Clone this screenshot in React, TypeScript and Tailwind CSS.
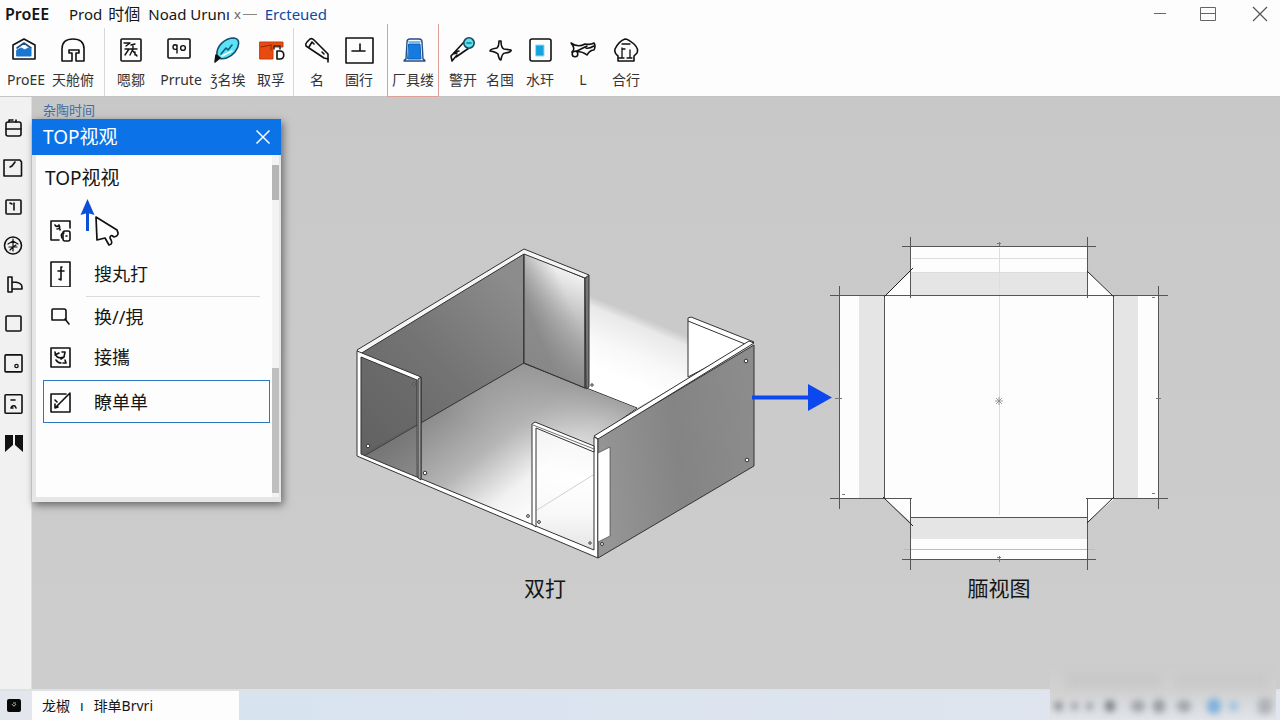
import type { ReactNode } from "react";

const ink = { fill: "none", stroke: "#111", strokeWidth: 1.6, strokeLinecap: "round", strokeLinejoin: "round" } as const;

function Icon({ w = 32, h = 28, children }: { w?: number; h?: number; children: ReactNode }) {
  return (
    <svg width={w} height={h} viewBox={`0 0 ${w} ${h}`} className="shrink-0" aria-hidden="true" {...ink}>
      {children}
    </svg>
  );
}

type Tool = { label: string; width: string; icon: ReactNode };

const fileTools: Tool[] = [
  {
    label: "ProEE",
    width: "w-11",
    icon: (
      <>
        <path d="M3 9 L14 3 L25 9 V23 H3 Z" />
        <path d="M7 12 L14 7 L21 12" stroke="#1f4e8c" />
        <path d="M7 14 L11 12 L15 14 L18 12 L21 13 V20 H7 Z" fill="#1976d2" stroke="#1976d2" strokeWidth="1" />
      </>
    ),
  },
  {
    label: "天舱俯",
    width: "w-[50px]",
    icon: <path d="M5 25 V13 C5 6 9 3 16 3 C23 3 27 6 27 13 V25 H19 V17 H22 V14 H12 V17 H15 V25 Z" />,
  },
];

const editTools: Tool[] = [
  {
    label: "嗯鄒",
    width: "w-12",
    icon: (
      <>
        <rect x="6" y="3" width="20" height="22" rx="1" />
        <path d="M9 7 H15 L11 10 M10 13 H14 L10 19 M16 9 L20 8 M15 13 H22 M18 10 V13 L15 19 M18 15 L22 20 M20 16 V19" strokeWidth="1.4" />
      </>
    ),
  },
  {
    label: "Prrute",
    width: "w-[52px]",
    icon: (
      <>
        <rect x="3" y="3" width="22" height="19" rx="1" />
        <path d="M12 9 V17 M12 11 C12 8 8 8 8 11 C8 14 12 14 12 12" strokeWidth="1.4" />
        <circle cx="18" cy="12" r="2.4" strokeWidth="1.4" />
      </>
    ),
  },
  {
    label: "ǯ名埃",
    width: "w-[42px]",
    icon: (
      <>
        <path d="M5 19 C4 10 13 2 22 2 C29 3 27 11 23 16 C18 22 11 24 7 22 Z" fill="#5be2f5" stroke="#16506e" />
        <path d="M9 18 L14 12 L16 14 L20 9" stroke="#0b5f7d" />
        <path d="M10 20 L20 15" stroke="#fff" />
        <path d="M4 19 L8 22 L3 26 Z" fill="#111" />
      </>
    ),
  },
  {
    label: "取孚",
    width: "w-11",
    icon: (
      <>
        <path d="M5 6 H28 V11 H18 V23 H5 Z" fill="#e84a10" stroke="#c43c08" strokeWidth="1" />
        <path d="M6 11 L16 9 M16 9 V14" stroke="#8e2a05" strokeWidth="1" />
        <path d="M19 13 V10 H25 V13" stroke="#333" />
        <path d="M22 15 V23 H25 C30 23 30 15 25 15 Z" fill="#fff" />
      </>
    ),
  },
];

const shapeTools: Tool[] = [
  {
    label: "名",
    width: "w-11",
    icon: (
      <>
        <path d="M5 10 Q4 8 6 6 L9 3 Q11 2 13 4 L27 18 L27 23 L23 22 Z" />
        <path d="M8 11 L11 6 L13 8 M27 23 V26 M21 16 L23 18" />
      </>
    ),
  },
  {
    label: "圄行",
    width: "w-10",
    icon: (
      <>
        <rect x="3" y="2" width="27" height="25" />
        <path d="M9 15 H22 M17 8 V15" />
      </>
    ),
  },
];

const activeTool: Tool = {
  label: "厂具缕",
  width: "w-[50px]",
  icon: (
    <>
      <path d="M9 23 L10 6 Q10 3 13 3 H22 Q25 3 25 6 L26 23 Q28 24 28 25 H7 Q7 24 9 23 Z" fill="#fff" stroke="#1f4e8c" strokeWidth="1.4" />
      <path d="M12 8 H23 L24 23 H11 Z" fill="#157be0" stroke="#0d5db0" strokeWidth="1" />
      <path d="M12 6 H23" stroke="#5ba4e6" />
    </>
  ),
};

const viewTools: Tool[] = [
  {
    label: "警开",
    width: "w-11",
    icon: (
      <>
        <path d="M5 25 L4 20 L17 6 M9 21 L22 12 M5 25 L10 19 M8 16 L12 15 M6 18 L10 17" />
        <circle cx="22" cy="7" r="5.2" fill="#5fe0ee" stroke="#17475c" />
        <path d="M20 7 H24" stroke="#0b7f95" />
      </>
    ),
  },
  {
    label: "名囤",
    width: "w-[30px]",
    icon: <path d="M17 5 Q17 12 20 13 L27 14 Q28 16 21 17 Q18 17 17 24 Q15 24 14 18 Q12 16 6 15 Q6 13 13 12 Q15 10 15 5 Z" />,
  },
  {
    label: "水玕",
    width: "w-[50px]",
    icon: (
      <>
        <rect x="6" y="3" width="21" height="22" rx="2" />
        <path d="M12 9 H20 V20 H12 Z" fill="#13a3dd" stroke="#8fdcf5" strokeWidth="1" />
      </>
    ),
  },
  {
    label: "L",
    width: "w-9",
    icon: (
      <>
        <path d="M4 7 Q11 12 18 8 Q24 9 27 7 Q29 10 27 14 Q23 14 20 19 Q14 14 5 16 Q9 13 4 7 Z" />
        <path d="M8 16 L20 10 M19 12 Q22 13 27 10" />
        <circle cx="8" cy="18" r="2.8" fill="#fff" />
      </>
    ),
  },
  {
    label: "合行",
    width: "w-[50px]",
    icon: (
      <>
        <path d="M15 3 Q18 3 24 8 Q29 13 27 17 L24 20 V25 H8 V20 Q4 17 5 13 Q9 5 15 3 Z" />
        <path d="M12 8 H20 M12 12 V22 M12 13 H15 M20 14 V22 M9 22 H14 M17 22 H22" strokeWidth="1.3" />
      </>
    ),
  },
];

function ToolButton({ label, width, icon }: Tool) {
  return (
    <button type="button" className={`${width} flex h-full shrink-0 flex-col items-center gap-1.5 pt-2`}>
      <Icon>{icon}</Icon>
      <span className="whitespace-nowrap text-[14px] leading-5 text-[#333]">{label}</span>
    </button>
  );
}

const railIcons: { name: string; icon: ReactNode }[] = [
  { name: "Layers", icon: <><rect x="3" y="4" width="15" height="14" rx="2" /><path d="M3 11 H18 M6 4 V2 H10 M13 2 V4" /></> },
  { name: "Sketch", icon: <><path d="M1 3 H17 L18.5 5 V19 H1 Z" /><path d="M7 10 L9 9 L12 5" /></> },
  { name: "Datum", icon: <><rect x="3" y="3" width="15" height="14" rx="1" /><path d="M7 6 L9 7 M11 6 V13" /></> },
  { name: "Orient", icon: <><circle cx="10" cy="9.5" r="8.5" /><path d="M5 8 L10 5 L15 8 M10 3 V15 M6 11 H14 M7 14 L10 11 L13 9" strokeWidth="1.2" /></> },
  { name: "Extrude", icon: <path d="M5 1 H9 V6 Q19 6 19 11 V13 H9 V16 H5 Z M9 6 V13" /> },
  { name: "Plane", icon: <rect x="3" y="1" width="15" height="15" rx="1" /> },
  { name: "Point", icon: <><rect x="2" y="0.9" width="17" height="17" rx="1" /><circle cx="13.5" cy="12" r="1.7" strokeWidth="1.3" /></> },
  { name: "Measure", icon: <><rect x="2" y="0.8" width="17" height="18.4" rx="1" /><path d="M8 6 L12 6 M8 14 Q9 11 12 12 L13 14 M8 14 H10" /></> },
  { name: "Bookmark", icon: <path d="M2 2 H10 L10 12 L2 19 Z M12 2 H20 V19 L12 12 Z" fill="#111" stroke="none" /> },
];

const menuRows: { label: string; row: string; icon: ReactNode }[] = [
  {
    label: "",
    row: "h-11",
    icon: (
      <>
        <path d="M11 23 H3 V4 H22 V11" />
        <path d="M7 8 Q9 11 11 8 Q13 12 9 12 M12 12 V13" />
        <rect x="15" y="14" width="7" height="10" rx="2" />
        <path d="M14 21 Q12 16 16 16 M18 19 H19" />
      </>
    ),
  },
  {
    label: "搜丸打",
    row: "h-11",
    icon: (
      <>
        <rect x="3" y="1" width="19" height="25" />
        <path d="M13 6 V19 M10 10 H16 M13 6 H14 M13 19 L11 18" />
      </>
    ),
  },
  { label: "换//挸", row: "h-10 border-t border-transparent", icon: <path d="M4 6 Q4 5 5 5 H16 Q18 5 18 7 V16 H4 Z M17 15 L21 20" /> },
  {
    label: "接攜",
    row: "h-[42px]",
    icon: (
      <>
        <rect x="3" y="4" width="19" height="19" />
        <path d="M7 8 Q8 16 16 13 M7 11 L11 9 M14 8 H17 L16 13 L13 15 M17 16 L18 19 H15 M8 16 Q10 19 13 19" />
      </>
    ),
  },
];

function BoxDrawing() {
  return (
    <svg width="418" height="330" viewBox="334 240 418 330" className="block overflow-visible" role="img" aria-label="双打" stroke="#333" strokeWidth="1" strokeLinejoin="round">
      <defs>
        <linearGradient id="leftWall" gradientUnits="userSpaceOnUse" x1="370" y1="440" x2="520" y2="290">
          <stop offset="0" stopColor="#666" />
          <stop offset="0.5" stopColor="#747474" />
          <stop offset="1" stopColor="#8c8c8c" />
        </linearGradient>
        <linearGradient id="backWall" gradientUnits="userSpaceOnUse" x1="585" y1="280" x2="545" y2="370">
          <stop offset="0" stopColor="#f0f0f0" />
          <stop offset="0.45" stopColor="#b9b9b9" />
          <stop offset="1" stopColor="#878787" />
        </linearGradient>
        <linearGradient id="backShade" gradientUnits="userSpaceOnUse" x1="524" y1="300" x2="562" y2="284">
          <stop offset="0" stopColor="#888" stopOpacity="0.9" />
          <stop offset="1" stopColor="#999" stopOpacity="0" />
        </linearGradient>
        <linearGradient id="floor" gradientUnits="userSpaceOnUse" x1="440" y1="395" x2="540" y2="520">
          <stop offset="0" stopColor="#858585" />
          <stop offset="0.45" stopColor="#b5b5b5" />
          <stop offset="0.75" stopColor="#f2f2f2" />
          <stop offset="1" stopColor="#fff" />
        </linearGradient>
        <linearGradient id="floorBack" gradientUnits="userSpaceOnUse" x1="590" y1="375" x2="540" y2="465">
          <stop offset="0" stopColor="#8c8c8c" stopOpacity="0.9" />
          <stop offset="1" stopColor="#bbb" stopOpacity="0" />
        </linearGradient>
        <linearGradient id="glow" gradientUnits="userSpaceOnUse" x1="640" y1="316" x2="615" y2="376">
          <stop offset="0" stopColor="#e4e4e4" stopOpacity="0" />
          <stop offset="0.15" stopColor="#e9e9e9" />
          <stop offset="0.6" stopColor="#f8f8f8" />
          <stop offset="1" stopColor="#fff" />
        </linearGradient>
        <linearGradient id="side" gradientUnits="userSpaceOnUse" x1="598" y1="440" x2="754" y2="420">
          <stop offset="0" stopColor="#959595" />
          <stop offset="0.5" stopColor="#848484" />
          <stop offset="1" stopColor="#8c8c8c" />
        </linearGradient>
        <linearGradient id="window" gradientUnits="userSpaceOnUse" x1="560" y1="480" x2="560" y2="550">
          <stop offset="0" stopColor="#fff" />
          <stop offset="0.5" stopColor="#f6f6f6" />
          <stop offset="1" stopColor="#dedede" />
        </linearGradient>
      </defs>

      <path d="M589 295 L690 337 V378 L637 408 L587 389 Z" fill="url(#glow)" stroke="none" />
      <path d="M359 455 L523 363 L637 408 L598 436 V552 Z" fill="url(#floor)" />
      <path d="M523 364 L636 408 L598 436 V480 L440 430 L420 422 Z" fill="url(#floorBack)" stroke="none" />
      <path d="M358 353 L524 253 V363 L364 456 L358 455 Z" fill="url(#leftWall)" />
      <path d="M524 253 L585 278 V388 L524 363 Z" fill="url(#backWall)" />
      <path d="M524 253 L585 278 V388 L524 363 Z" fill="url(#backShade)" />
      <path d="M585 278 L589 275 V387 L586 389 Z" fill="#777" />
      <path d="M357 350 L524 249 L589 275 L585 278 L524 254 L360 354 Z" fill="#f5f5f5" />

      <path d="M688 377 V318 L691 317 L754 342 L749 345 Z" fill="#fff" />
      <path d="M688 321 L745 344" fill="none" />
      <path d="M360 355 L416 379 V425 L364 454 H360 Z" fill="#555" fillOpacity="0.15" stroke="none" />
      <path d="M362 454 L416 424 V477 Z" fill="#555" fillOpacity="0.35" stroke="none" />
      <path d="M535 427 L594 451 V550 L535 527 Z" fill="url(#window)" fillOpacity="0.8" stroke="none" />
      <path d="M537 510 L593 475" stroke="#d0d0d0" />

      <path d="M357 456 V351 L421 377 V478 L417 477 V380 L361 357 V454 L594 550 V437 L598 439 V558 Z" fill="#fff" />
      <path d="M418 379 L421 377 V480 L418 478 Z" fill="#999" />
      <path d="M532 524 V424 L535 422 L594 446 V452 L536 428 V527 Z" fill="#fff" />
      <path d="M533 425 L594 449" strokeWidth="0.7" />
      <path d="M598 438 L754 345 V466 L598 558 Z" fill="url(#side)" />
      <path d="M594 436 L749 341 L754 343 L598 439 Z" fill="#fff" />
      <path d="M598 453 L610 447 V536 L598 542 Z" fill="#fff" strokeWidth="0.6" />
      <g fill="#fff" strokeWidth="1">
        <circle cx="746" cy="361" r="1.8" /><circle cx="747" cy="460" r="1.8" />
        <circle cx="368" cy="446" r="1.8" /><circle cx="425" cy="473" r="1.8" />
        <circle cx="414" cy="384" r="1.2" /><circle cx="592" cy="385" r="1.2" />
        <circle cx="528" cy="516" r="1.4" /><circle cx="539" cy="522" r="1.4" />
        <circle cx="590" cy="543" r="1.2" /><circle cx="602" cy="544" r="1.5" />
      </g>
    </svg>
  );
}

function FlatDrawing() {
  return (
    <svg width="334" height="330" viewBox="832 240 334 330" className="block overflow-visible" role="img" aria-label="腼视图" fill="none" stroke="#555" strokeWidth="1">
      <g stroke="none">
        <path d="M911 247 H1087 V271 L1114 296 H1158 V499 H1114 L1087 522 V559 H911 V522 L885 499 H840 V296 H885 L911 271 Z" fill="#fdfdfd" />
        <path d="M911 272 H1087 V296 H911 Z M911 517 H1087 V539 H911 Z M859 296 H884 V499 H859 Z M1114 296 H1138 V499 H1114 Z" fill="#e5e5e5" />
      </g>
      <path d="M911.5 258.5 H1087 M911 272.5 H1087 M999.5 248 V515" stroke="#ddd" />
      <path d="M904 549.5 H1095" stroke="#bbb" />
      <path d="M902 246.5 H1096 M910.5 237 V298 M1087.5 237 V298 M830 295.5 H1168 M839.5 286 V509 M1158.5 286 V509 M884.5 296 V499 M1113.5 296 V499 M830 498.5 H912 M1086 498.5 H1168 M910.5 498 V570 M1087.5 498 V570 M911 517.5 H1087 M902 559.5 H1096" />
      <path d="M884 297 L913 268 M1087 271 L1114 297 M883 497 L913 526 M1114 497 L1087 523" stroke="#222" />
      <path d="M995 401 H1003 M999 397 V405 M996 398 L1002 404 M1002 398 L996 404" stroke="#888" strokeWidth="0.8" />
      <path d="M997 243.5 H1001 M999.5 242 V246 M997 557.5 H1001 M999.5 556 V562 M835 398.5 H842 M1156 398.5 H1161 M842 494.5 H845 M1152 493.5 H1155 M1152 297.5 H1155" stroke="#777" />
    </svg>
  );
}

function Watermark() {
  return (
    <div className="pointer-events-none absolute bottom-0 right-1 flex h-[56px] w-[226px] flex-col justify-between overflow-hidden bg-gradient-to-b from-[#cccccc] via-[#d2d2d2] to-[#e1e4e9] px-1 pb-1.5 pt-2">
      <div className="flex h-5 gap-3 pl-3 blur-[5px]">
        <i className="h-4 w-24 bg-[#c8c8c8]" />
        <i className="h-4 w-24 bg-[#c9c9c9]" />
      </div>
      <div className="flex items-center gap-2 blur-[3px]">
        <i className="size-2.5 rounded-full bg-[#94979c]" />
        <i className="size-2 rounded-full bg-[#9da0a5]" />
        <i className="size-2 rounded-full bg-[#9da0a5]" />
        <i className="ml-1 size-3 rounded-full bg-[#7f8287]" />
        <i className="ml-2 h-3 w-4 rounded-full bg-[#a2a5aa]" />
        <i className="size-3.5 rounded-full bg-[#9a9da2]" />
        <i className="ml-1 h-3 w-4 rounded-full bg-[#a2a5aa]" />
        <i className="ml-2 size-4 rounded-full bg-[#80b1dd]" />
        <i className="size-2.5 rounded-full bg-[#9dc2e2]" />
        <i className="ml-3 size-4 rounded bg-[#b0b3b7]" />
      </div>
    </div>
  );
}

function ViewPanel() {
  return (
    <section className="absolute left-0 top-[22px] w-[249px] bg-[#fdfdfd] shadow-[2px_3px_8px_rgba(0,0,0,0.5)]">
      <header className="flex h-9 items-center justify-between bg-[#0b72e7] pl-[11px] pr-2 text-white">
        <h2 className="text-[19px] leading-6">TOP视观</h2>
        <button type="button" aria-label="Close">
          <svg width="20" height="20" viewBox="0 0 20 20" stroke="#fff" strokeWidth="1.5" aria-hidden="true">
            <path d="M3.5 3.5 L16.5 16.5 M16.5 3.5 L3.5 16.5" />
          </svg>
        </button>
      </header>
      <div className="flex border-b-[5px] border-l-4 border-r-2 border-[#e6e6e6]">
        <div className="relative min-w-0 flex-1 pb-[74px]">
          <h3 className="flex h-[53px] items-start pl-[9px] pt-[11px] text-[19px] leading-6">TOP视视</h3>
          <ul>
            {menuRows.map((r, i) => (
              <li key={i}>
                <button type="button" aria-label={r.label || "Assembly"} className={`${r.row} flex w-full items-center gap-5 pl-3 text-left text-[18px]`}>
                  <Icon w={26} h={26}>{r.icon}</Icon>
                  <span className="whitespace-nowrap leading-6">{r.label}</span>
                </button>
                {i === 1 && <hr className="-mb-px ml-[50px] mr-3 border-[#dcdcdc]" />}
              </li>
            ))}
            <li className="pl-[7px] pr-0.5 pt-0.5">
              <button type="button" className="flex h-[43px] w-full items-center gap-5 border border-[#2b78c0] pl-1 text-left text-[18px]">
                <Icon w={26} h={26}>
                  <path d="M22 5 V23 H3 V5 H18 M7 11 L9 13 M7 19 L22 4 M7 15 V19 L10 18" />
                </Icon>
                <span className="leading-6">瞭单单</span>
              </button>
            </li>
          </ul>
          <svg width="42" height="50" viewBox="0 0 42 50" className="absolute left-[44px] top-[42px]" aria-hidden="true">
            <path d="M7.5 34 V13" stroke="#0b50d8" strokeWidth="3" />
            <path d="M7.5 2 L14.5 18 L7.5 16 L0.5 18 Z" fill="#0b50d8" />
            <path d="M16 20 L37 33 Q40 39 34 40 Q30 37 30 41 Q34 47 29 48 L25 41 L17 43 Z" fill="#fff" stroke="#111" strokeWidth="1.7" strokeLinejoin="round" />
          </svg>
        </div>
        <div className="flex w-[7px] flex-col justify-between bg-[#f3f3f3] pb-1 pt-2.5">
          <div className="h-[35px] bg-[#b5b5b5]" />
          <div className="h-[125px] bg-[#bfbfbf]" />
        </div>
      </div>
    </section>
  );
}

export default function App() {
  return (
    <div className="relative flex min-h-screen flex-col overflow-hidden bg-[#cacaca] font-['Noto_Sans','Noto_Sans_CJK_SC',sans-serif] text-[#151515]">
      <header className="bg-[#fdfdfd]">
        <div className="flex h-7 items-center justify-between pl-[5px] pr-3">
          <div className="flex items-center text-[15px] leading-5">
            <h1 className="w-16 text-[16px] font-semibold">ProEE</h1>
            <nav className="flex items-center gap-1.5">
              <a href="#prod" className="whitespace-nowrap">Prod</a>
              <a href="#time" className="whitespace-nowrap text-[16px]">时個</a>
              <a href="#noad" className="ml-0.5 whitespace-nowrap">Noad Urunı</a>
            </nav>
            <span className="ml-1 flex items-center text-[13px] text-[#666]">
              x<i className="ml-0.5 h-px w-3.5 bg-[#888]" />
            </span>
            <a href="#extend" className="ml-2 text-[#0b4aa8]">Ercteued</a>
          </div>
          <div className="flex items-center">
            <button type="button" aria-label="Minimize" className="flex w-12 justify-center">
              <svg width="20" height="16" viewBox="0 0 20 16" stroke="#666" aria-hidden="true"><path d="M4 7.5 H16" /></svg>
            </button>
            <button type="button" aria-label="Restore" className="flex w-12 justify-center">
              <svg width="18" height="16" viewBox="0 0 18 16" fill="none" stroke="#666" aria-hidden="true"><path d="M1.5 1.5 H16.5 V14.5 H1.5 Z M1.5 7.5 H16.5" /></svg>
            </button>
            <button type="button" aria-label="Close window" className="flex w-9 justify-end">
              <svg width="16" height="16" viewBox="0 0 16 16" stroke="#555" strokeWidth="1.2" aria-hidden="true"><path d="M1 1 L15 15 M15 1 L1 15" /></svg>
            </button>
          </div>
        </div>
        <div className="flex h-[69px] items-start border-b border-[#c4c4c4] pl-1">
          <div className="flex h-full border-r border-[#d8d8d8] pr-1.5">
            {fileTools.map((t) => <ToolButton key={t.label} {...t} />)}
          </div>
          <div className="flex h-full border-r border-[#d8d8d8] pl-0.5">
            {editTools.map((t) => <ToolButton key={t.label} {...t} />)}
          </div>
          <div className="flex h-full pl-px pr-2">
            {shapeTools.map((t) => <ToolButton key={t.label} {...t} />)}
          </div>
          <div className="-mb-px -mt-1 flex h-[73px] border-x border-b border-[#dfa09a] pt-1">
            <ToolButton {...activeTool} />
          </div>
          <div className="flex h-full pl-0.5">
            {viewTools.map((t) => <ToolButton key={t.label} {...t} />)}
          </div>
        </div>
      </header>

      <div className="flex flex-1">
        <aside className="w-8 shrink-0 border-r border-[#dedede] bg-[#f1f1f1] pt-[21px]">
          <ul className="flex h-[335px] flex-col justify-between pl-[3px]">
            {railIcons.map((r) => (
              <li key={r.name} className="h-5">
                <button type="button" aria-label={r.name} className="block">
                  <Icon w={20} h={20}>{r.icon}</Icon>
                </button>
              </li>
            ))}
          </ul>
        </aside>
        <main className="relative min-w-0 flex-1 bg-gradient-to-b from-[#c8c8c8] to-[#cccdcc]">
          <p className="absolute left-[11px] top-[3px] text-[13px] leading-5 text-[#416b9f]">杂陶时间</p>
          <ViewPanel />
          <div className="flex items-start pl-[302px] pt-[143px]">
            <figure className="shrink-0">
              <BoxDrawing />
              <figcaption className="pl-1 pt-1.5 text-center text-[21px] leading-6">双打</figcaption>
            </figure>
            <svg width="80" height="330" viewBox="752 240 80 330" className="relative shrink-0" aria-hidden="true">
              <path d="M752 397.5 H812" stroke="#0d47ee" strokeWidth="4" />
              <path d="M808 384 L832 397.5 L808 411 Z" fill="#0d47ee" />
            </svg>
            <figure className="shrink-0">
              <FlatDrawing />
              <figcaption className="pt-1.5 text-center text-[21px] leading-6">腼视图</figcaption>
            </figure>
          </div>
        </main>
      </div>

      <footer className="flex h-[31px] items-stretch border-t-2 border-[#dfe2e4] bg-gradient-to-r from-[#d8e3f0] from-20% to-[#e1e5ee]">
        <div className="flex w-8 items-center bg-[#e3e6ec] pl-[7px]">
          <svg width="14" height="13" viewBox="0 0 14 13" aria-hidden="true">
            <rect width="14" height="13" rx="2" fill="#080808" />
            <path d="M5 5 Q7 9 9 5 M6 4 H9" fill="none" stroke="#aaa" />
          </svg>
        </div>
        <div className="flex w-[207px] items-center gap-2.5 bg-[#fdfdfd] pl-2.5 text-[14px] leading-5">
          <span>龙椒</span>
          <span>ı</span>
          <span>琲单Brvri</span>
        </div>
      </footer>
      <Watermark />
    </div>
  );
}
